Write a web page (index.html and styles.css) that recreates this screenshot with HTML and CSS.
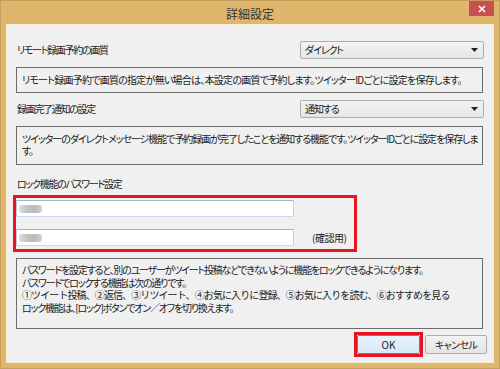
FILE: index.html
```html
<!DOCTYPE html>
<html lang="ja">
<head>
<meta charset="utf-8">
<link rel="stylesheet" href="styles.css">
</head>
<body>
<div class="window">
  <div class="titlebar">
    <span class="title">詳細設定</span>
    <div class="close">
      <svg width="8" height="8" viewBox="0 0 8 8"><path d="M1 1 L7 7 M7 1 L1 7" stroke="#fff" stroke-width="1.6" fill="none"/></svg>
    </div>
  </div>
  <div class="content">
    <div class="row">
      <span class="label">リモート録画予約の画質</span>
      <div class="select"><span>ダイレクト</span><svg class="arrow" width="7" height="4" viewBox="0 0 7 4"><path d="M0 0 H7 L3.5 4 Z" fill="#222"/></svg></div>
    </div>
    <div class="note note1">リモート録画予約で画質の指定が無い場合は、本設定の画質で予約します。ツイッターIDごとに設定を保存します。</div>
    <div class="row row2">
      <span class="label">録画完了通知の設定</span>
      <div class="select"><span>通知する</span><svg class="arrow" width="7" height="4" viewBox="0 0 7 4"><path d="M0 0 H7 L3.5 4 Z" fill="#222"/></svg></div>
    </div>
    <div class="note note2">ツイッターのダイレクトメッセージ機能で予約録画が完了したことを通知する機能です。ツイッターIDごとに設定を保存しま<br>す。</div>
    <div class="label label3">ロック機能のパスワード設定</div>
    <div class="lockbox">
      <div class="inrow"><div class="input"><span class="mask"></span></div></div>
      <div class="inrow"><div class="input"><span class="mask"></span></div><span class="confirm">(確認用)</span></div>
    </div>
    <div class="note note3">
      <span class="line">パスワードを設定すると、別のユーザーがツイート投稿などできないように機能をロックできるようになります。</span>
      <span class="line">パスワードでロックする機能は次の通りです。</span>
      <span class="line line-list">①ツイート投稿、②返信、③リツイート、④お気に入りに登録、⑤お気に入りを読む、⑥おすすめを見る</span>
      <span class="line">ロック機能は、[ロック]ボタンでオン／オフを切り換えます。</span>
    </div>
    <div class="buttons">
      <div class="focusbox"><div class="btn ok">OK</div></div>
      <div class="btn cancel">キャンセル</div>
    </div>
  </div>
</div>
</body>
</html>
```
FILE: styles.css
```css
html, body {
  margin: 0;
  padding: 0;
  background: #ffffff;
}
body {
  font-family: "Noto Sans CJK JP", "Noto Sans", sans-serif;
  font-feature-settings: "palt";
  color: #1a1a1a;
  letter-spacing: -1.1px;
}
.window {
  position: relative;
  width: 500px;
  height: 369px;
  box-sizing: border-box;
  border: 1px solid #c49f5d;
  background: #dfb66c;
  padding: 0 5px 5px;
  display: flex;
  flex-direction: column;
}
.titlebar {
  height: 23px;
  display: flex;
  align-items: center;
  justify-content: center;
}
.title {
  font-size: 12px;
  color: #333333;
  line-height: 14px;
  padding-top: 3px;
  letter-spacing: 0px;
}
.close {
  position: absolute;
  top: 0;
  right: 5px;
  width: 25px;
  height: 15px;
  background: #c75050;
  display: flex;
  align-items: center;
  justify-content: center;
}
.close svg { display: block; }
.content {
  flex: 1;
  background: #f0f0f0;
  border: 1px solid #f6ead3;
  padding: 16px 10px 0 9px;
  display: flex;
  flex-direction: column;
}
.label {
  font-size: 10px;
  line-height: 14px;
  padding-left: 1px;
  letter-spacing: -1.3px;
}
.row {
  display: flex;
  justify-content: space-between;
  align-items: center;
  height: 18px;
}
.row2 { margin-top: 7px; }
.select {
  width: 184px;
  height: 18px;
  box-sizing: border-box;
  margin-right: -1px;
  border: 1px solid #acacac;
  border-radius: 2px;
  background: linear-gradient(#f3f3f3, #e6e6e6);
  display: flex;
  align-items: center;
  justify-content: space-between;
  padding: 0 5px 0 4px;
  font-size: 10px;
  line-height: 12px;
}
.arrow { display: block; }
.note {
  margin-top: 8px;
  border: 1px solid #6c6c6c;
  font-size: 10px;
  line-height: 12px;
  padding: 6px 5px;
  white-space: nowrap;
}
.note1 { letter-spacing: -0.75px; }
.note2 { padding-bottom: 7px; letter-spacing: -1.05px; }
.label3 {
  margin-top: 11px;
  height: 16px;
  line-height: 16px;
}
.lockbox {
  margin: 3px 0 0 -3px;
  width: 344px;
  box-sizing: border-box;
  border: 3px solid #e6141e;
  padding: 2px 0 3px 0;
  display: flex;
  flex-direction: column;
  gap: 12px;
}
.inrow {
  display: flex;
  align-items: center;
}
.input {
  width: 278px;
  height: 17px;
  box-sizing: border-box;
  background: #ffffff;
  border: 1px solid;
  border-color: #9db7d1 #c3d6e8 #c9dbec #b4c9de;
  display: flex;
  align-items: center;
}
.mask {
  display: block;
  width: 23px;
  height: 8px;
  margin-left: 2px;
  margin-top: 1px;
  border-radius: 3px;
  background: linear-gradient(90deg, #dedede 0%, #c2c2c2 35%, #bcbcbc 70%, #d4d4d4 100%);
  filter: blur(0.7px);
}
.confirm {
  margin-left: 18px;
  font-size: 10px;
  line-height: 12px;
  letter-spacing: -0.5px;
}
.note3 {
  margin-top: 6px;
  height: 71px;
  box-sizing: border-box;
  padding: 5px 5px 0;
  line-height: 12.5px;
  letter-spacing: -1.2px;
}
.line {
  display: block;
  height: 12.5px;
}
.line-list {
  font-feature-settings: normal;
  letter-spacing: -0.9px;
}
.buttons {
  margin-top: 3px;
  margin-right: -4px;
  display: flex;
  justify-content: flex-end;
  align-items: center;
}
.focusbox {
  border: 3px solid #e6141e;
}
.btn {
  height: 19px;
  box-sizing: border-box;
  border-radius: 2px;
  font-size: 10px;
  display: flex;
  align-items: center;
  justify-content: center;
}
.ok {
  width: 63px;
  border: 1px solid #3d8ed1;
  background: linear-gradient(#e9f3fc, #d5e8f8);
  letter-spacing: 0;
}
.cancel {
  width: 62px;
  margin-left: 2px;
  border: 1px solid #acacac;
  background: linear-gradient(#f3f3f3, #e3e3e3);
  letter-spacing: -0.6px;
}
```
